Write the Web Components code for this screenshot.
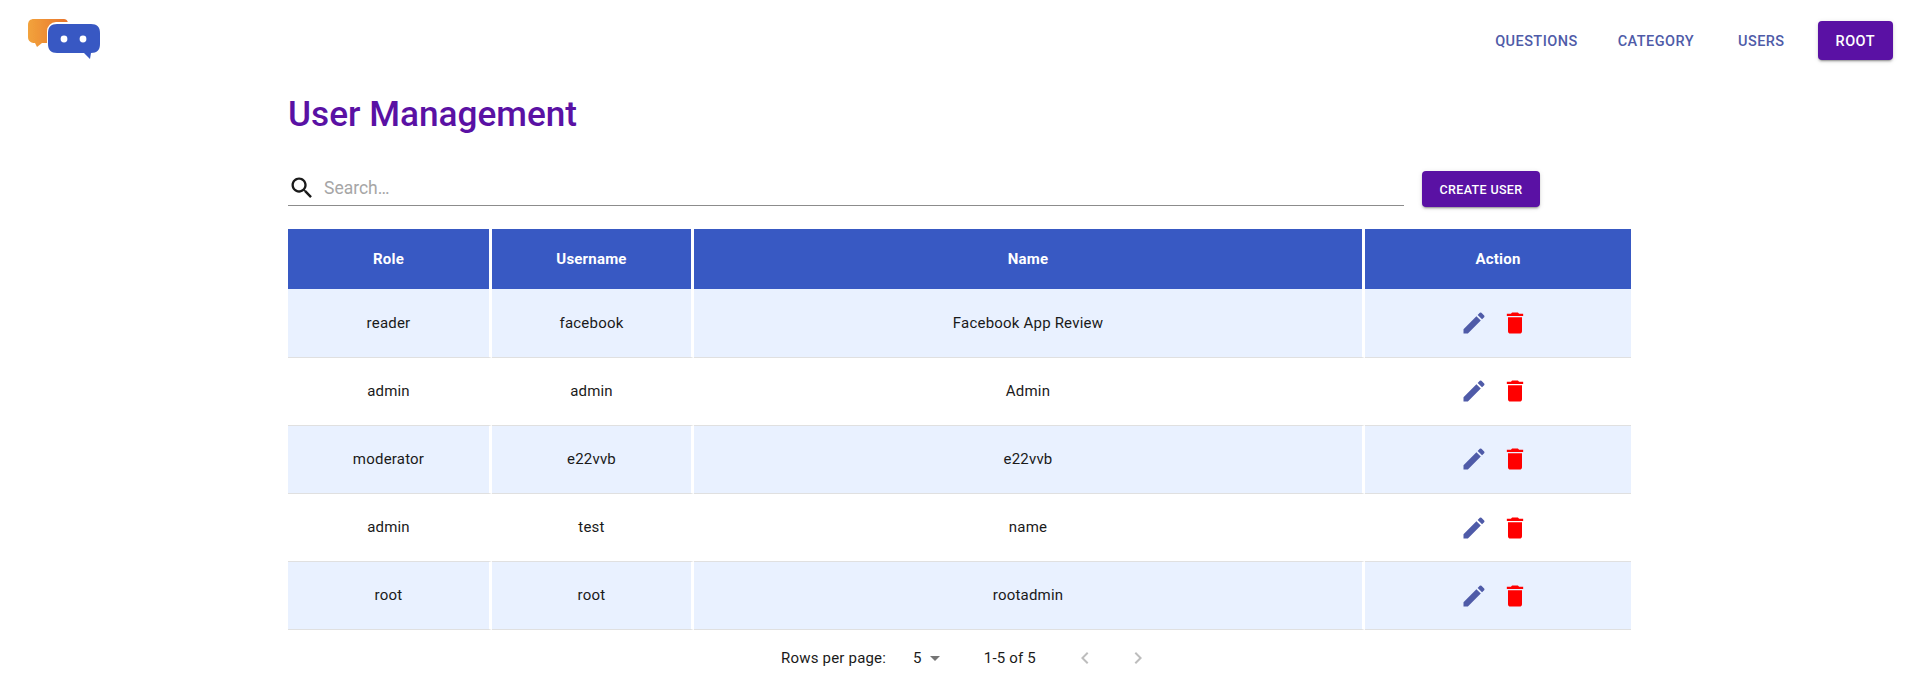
<!DOCTYPE html>
<html lang="en">
  <head>
    <meta charset="utf-8">
    <title>User Management</title>
    <style>
      html, body {
        margin: 0;
        padding: 0;
        background: #fff;
        font-family: Roboto, "Liberation Sans", sans-serif;
        color: #1a1a1a;
      }
    </style>
    <script>
      const ICONS = {
        edit: 'M3 17.25V21h3.75L17.81 9.94l-3.75-3.75L3 17.25zM20.71 7.04c.39-.39.39-1.02 0-1.41l-2.34-2.34a.9959.9959 0 0 0-1.41 0l-1.83 1.83 3.75 3.75 1.83-1.83z',
        trash: 'M6 19c0 1.1.9 2 2 2h8c1.1 0 2-.9 2-2V7H6v12zM19 4h-3.5l-1-1h-5l-1 1H5v2h14V4z',
        search: 'M15.5 14h-.79l-.28-.27C15.41 12.59 16 11.11 16 9.5 16 5.91 13.09 3 9.5 3S3 5.91 3 9.5 5.91 16 9.5 16c1.61 0 3.09-.59 4.23-1.57l.27.28v.79l5 4.99L20.49 19l-4.99-5zm-6 0C7.01 14 5 11.99 5 9.5S7.01 5 9.5 5 14 7.01 14 9.5 11.99 14 9.5 14z',
        left: 'M15.41 7.41L14 6l-6 6 6 6 1.41-1.41L10.83 12z',
        right: 'M10 6L8.59 7.41 13.17 12l-4.58 4.59L10 18l6-6z',
        drop: 'M7 10l5 5 5-5z',
      };

      customElements.define('app-icon', class extends HTMLElement {
        connectedCallback() {
          const size = this.getAttribute('size') || 24;
          const color = this.getAttribute('color') || 'currentColor';
          this.attachShadow({ mode: 'open' }).innerHTML = `
            <style>
              :host { display: block; width: ${size}px; height: ${size}px; flex: none; }
              svg { display: block; width: 100%; height: 100%; fill: ${color}; }
            </style>
            <svg viewBox="0 0 24 24"><path d="${ICONS[this.getAttribute('name')]}"></path></svg>`;
        }
      });

      customElements.define('app-logo', class extends HTMLElement {
        constructor() {
          super();
          this.attachShadow({ mode: 'open' }).innerHTML = `
            <style>
              :host { display: block; width: 80px; height: 48px; }
              svg { display: block; width: 100%; height: 100%; }
            </style>
            <svg viewBox="0 0 80 48">
              <defs>
                <linearGradient id="o" x1="0" x2="1" y1="0" y2="0">
                  <stop offset="0" stop-color="#f2a33c"></stop>
                  <stop offset="1" stop-color="#e8742c"></stop>
                </linearGradient>
                <filter id="soft"><feGaussianBlur stdDeviation="0.35"></feGaussianBlur></filter>
              </defs>
              <g filter="url(#soft)">
                <path fill="url(#o)" d="M6 0h29c3 0 5 1 5 5v14c0 3-2 5-5 5H14l-5 4-2-4c-4 0-7-2-7-6V6c0-4 2-6 6-6z"></path>
                <rect x="19" y="3" width="54" height="32" rx="9" fill="#fff"></rect>
                <path fill="#3859c3" d="M29 5h34c6 0 9 3 9 9v11c0 6-3 9-9 9l-1 6-6-6H29c-6 0-9-3-9-9V14c0-6 3-9 9-9z"></path>
                <circle cx="36" cy="20" r="3.4" fill="#fff"></circle>
                <circle cx="55" cy="20" r="3.4" fill="#fff"></circle>
              </g>
            </svg>`;
        }
      });

      customElements.define('nav-link', class extends HTMLElement {
        constructor() {
          super();
          this.attachShadow({ mode: 'open' }).innerHTML = `
            <style>
              :host {
                display: flex;
                align-items: center;
                justify-content: center;
                box-sizing: border-box;
                height: 39px;
                padding-top: 1px;
                font-size: 14.5px;
                font-weight: 500;
                letter-spacing: 0.45px;
                color: #4f5ba8;
                text-transform: uppercase;
                white-space: nowrap;
              }
              :host([active]) {
                color: #fff;
                background: #5a11a4;
                border-radius: 4px;
                padding: 1px 18px 0;
                box-shadow: 0 3px 1px -2px rgba(0,0,0,.2), 0 2px 2px 0 rgba(0,0,0,.14), 0 1px 5px 0 rgba(0,0,0,.12);
              }
            </style>
            <slot></slot>`;
        }
      });

      customElements.define('top-bar', class extends HTMLElement {
        constructor() {
          super();
          this.attachShadow({ mode: 'open' }).innerHTML = `
            <style>
              :host {
                display: flex;
                align-items: flex-start;
                justify-content: space-between;
                box-sizing: border-box;
                padding: 19px 23px 0 28px;
                height: 60px;
              }
              nav { display: flex; align-items: center; margin-top: 2px; }
              ::slotted(nav-link:nth-child(2)) { margin-left: 40px; }
              ::slotted(nav-link:nth-child(3)) { margin-left: 44px; }
              ::slotted(nav-link:nth-child(4)) { margin-left: 33px; }
            </style>
            <app-logo></app-logo>
            <nav><slot></slot></nav>`;
        }
      });

      customElements.define('search-bar', class extends HTMLElement {
        constructor() {
          super();
          this.attachShadow({ mode: 'open' }).innerHTML = `
            <style>
              :host {
                display: flex;
                align-items: center;
                gap: 8px;
                box-sizing: border-box;
                width: 1116px;
                height: 36px;
                border-bottom: 1px solid #8c8c8c;
                color: #1a1a1a;
                margin-top: -1px;
              }
              input {
                flex: 1;
                border: 0;
                outline: 0;
                padding: 0;
                background: none;
                font: 400 17.5px Roboto, sans-serif;
              }
              input::placeholder { color: #a6a6a6; opacity: 1; }
            </style>
            <app-icon name="search" size="28"></app-icon>
            <input placeholder="Search…">`;
        }
      });

      customElements.define('primary-button', class extends HTMLElement {
        constructor() {
          super();
          this.attachShadow({ mode: 'open' }).innerHTML = `
            <style>
              :host {
                display: flex;
                align-items: center;
                justify-content: center;
                width: 118px;
                height: 36px;
                border-radius: 4px;
                background: #5a11a4;
                color: #fff;
                font-size: 12.5px;
                font-weight: 500;
                letter-spacing: 0.35px;
                text-transform: uppercase;
                white-space: nowrap;
                box-shadow: 0 3px 1px -2px rgba(0,0,0,.2), 0 2px 2px 0 rgba(0,0,0,.14), 0 1px 5px 0 rgba(0,0,0,.12);
              }
            </style>
            <slot></slot>`;
        }
      });

      const COLUMNS = '204px 202px 671px 266px';

      customElements.define('user-head', class extends HTMLElement {
        constructor() {
          super();
          this.attachShadow({ mode: 'open' }).innerHTML = `
            <style>
              :host {
                display: grid;
                grid-template-columns: ${COLUMNS};
                height: 60.45px;
                color: #fff;
                font-size: 15px;
                font-weight: 700;
                letter-spacing: 0.2px;
              }
              div {
                display: flex;
                align-items: center;
                justify-content: center;
                background: #3859c3;
                border-right: 3px solid #fff;
              }
              div:last-child { border-right: 0; }
            </style>
            <div>Role</div><div>Username</div><div>Name</div><div>Action</div>`;
        }
      });

      customElements.define('user-row', class extends HTMLElement {
        connectedCallback() {
          const shadow = this.attachShadow({ mode: 'open' });
          shadow.innerHTML = `
            <style>
              :host {
                display: grid;
                grid-template-columns: ${COLUMNS};
                height: 68.1px;
                font-size: 15px;
                letter-spacing: 0.2px;
                color: #1a1a1a;
              }
              :host(:nth-child(odd)) div { background: #e9f1ff; }
              div {
                display: flex;
                align-items: center;
                justify-content: center;
                box-sizing: border-box;
                padding-bottom: 0.4px;
                border-right: 3px solid #fff;
                border-bottom: 1px solid #e0e0e0;
              }
              div:last-child { border-right: 0; gap: 13px; padding: 0.6px 8px 0 0; }
            </style>
            <div id="role"></div><div id="username"></div><div id="name"></div>
            <div>
              <app-icon name="edit" size="28" color="#4f5ba8"></app-icon>
              <app-icon name="trash" size="28" color="#ff0000"></app-icon>
            </div>`;
          for (const key of ['role', 'username', 'name']) {
            shadow.getElementById(key).textContent = this.getAttribute(key);
          }
        }
      });

      customElements.define('table-pager', class extends HTMLElement {
        constructor() {
          super();
          this.attachShadow({ mode: 'open' }).innerHTML = `
            <style>
              :host {
                display: flex;
                align-items: center;
                height: 56px;
                padding-left: 493px;
                font-size: 15px;
                letter-spacing: 0.2px;
                color: #1a1a1a;
              }
              .size { display: flex; align-items: center; margin-left: 27px; }
              .size app-icon { margin-left: 1px; }
              .range { margin-left: 37px; }
              .nav { display: flex; margin-left: 37px; gap: 29px; }
            </style>
            <span>Rows per page:</span>
            <span class="size">5<app-icon name="drop" size="24" color="#757575"></app-icon></span>
            <span class="range">1-5 of 5</span>
            <span class="nav">
              <app-icon name="left" size="24" color="#bdbdbd"></app-icon>
              <app-icon name="right" size="24" color="#bdbdbd"></app-icon>
            </span>`;
        }
      });

      customElements.define('user-page', class extends HTMLElement {
        constructor() {
          super();
          this.attachShadow({ mode: 'open' }).innerHTML = `
            <style>
              :host {
                display: block;
                box-sizing: border-box;
                width: 1343px;
                margin-left: 288px;
              }
              h1 {
                margin: 34px 0 0;
                font-size: 35.2px;
                line-height: 40px;
                font-weight: 500;
                color: #5a11a4;
              }
              .tools {
                display: flex;
                align-items: flex-start;
                gap: 18px;
                margin-top: 37px;
              }
            </style>
            <h1>User Management</h1>
            <div class="tools">
              <search-bar></search-bar>
              <primary-button>Create User</primary-button>
            </div>
            <user-head style="margin-top:22px"></user-head>
            <div><slot name="row"></slot></div>
            <table-pager></table-pager>`;
        }
      });
    </script>
  </head>
  <body>
    <top-bar>
      <nav-link>Questions</nav-link>
      <nav-link>Category</nav-link>
      <nav-link>Users</nav-link>
      <nav-link active>Root</nav-link>
    </top-bar>
    <user-page>
      <user-row slot="row" role="reader" username="facebook" name="Facebook App Review"></user-row>
      <user-row slot="row" role="admin" username="admin" name="Admin"></user-row>
      <user-row slot="row" role="moderator" username="e22vvb" name="e22vvb"></user-row>
      <user-row slot="row" role="admin" username="test" name="name"></user-row>
      <user-row slot="row" role="root" username="root" name="rootadmin"></user-row>
    </user-page>
  </body>
</html>
